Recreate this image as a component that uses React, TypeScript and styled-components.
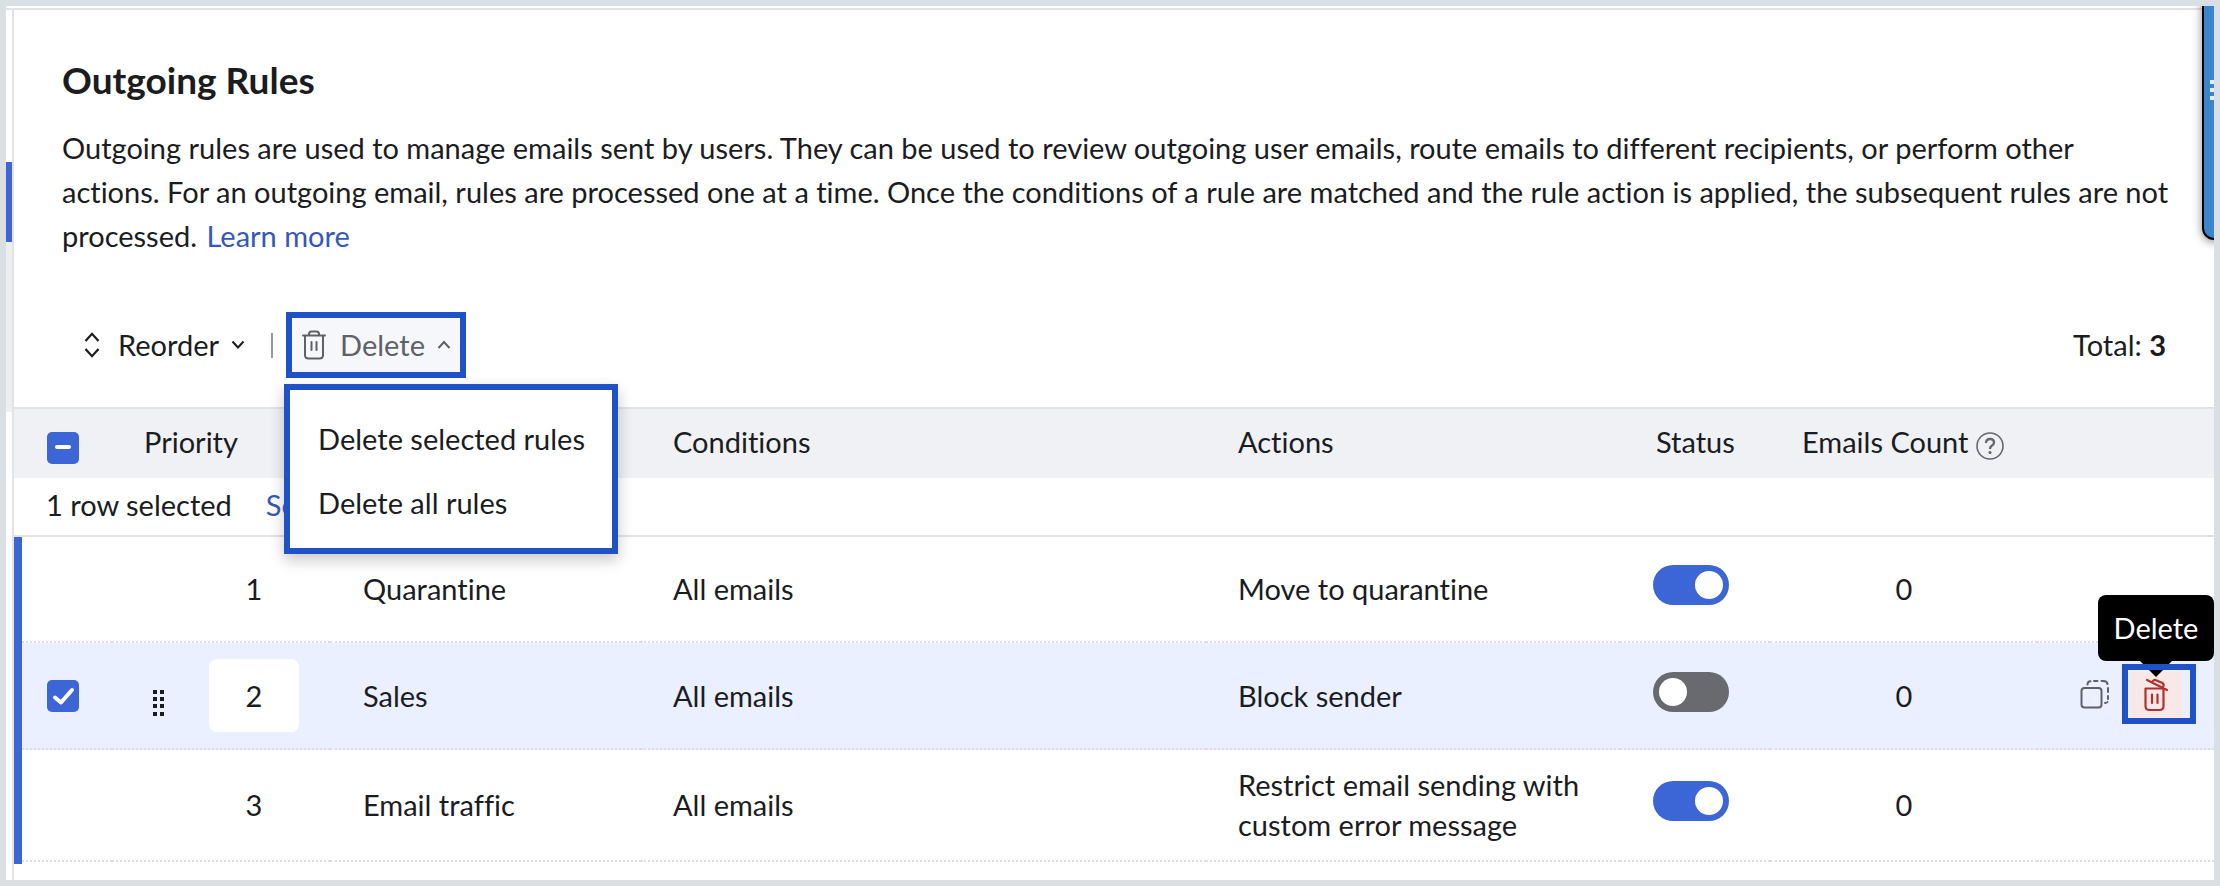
import React, { useEffect, useRef, useState } from "react";
import styled, { createGlobalStyle, css } from "styled-components";

const color = {
  frame: "#d9dfe2",
  line: "#e2e3e5",
  dots: "#dcdee3",
  ink: "#1b1c1f",
  muted: "#5f6166",
  brand: "#3c66d6",
  outline: "#2051c6",
  link: "#3558b8",
  head: "#f0f1f4",
  rowActive: "#eaf0ff",
  danger: "#b3302f",
};

const GlobalStyle = createGlobalStyle`
  *, *::before, *::after { box-sizing: border-box; }
  body {
    margin: 0;
    background: #fff;
    color: ${color.ink};
    font-family: Lato, "Liberation Sans", sans-serif;
    font-size: 29px;
    line-height: 40px;
    font-variant-ligatures: none;
  }
  button, input { font: inherit; color: inherit; }
  button { cursor: pointer; }
  a { color: ${color.link}; text-decoration: none; }
`;

const Frame = styled.div`
  position: relative;
  display: flex;
  min-height: 100vh;
  padding-top: 2px;
  border: 6px solid ${color.frame};
  overflow: hidden;
`;

const Rail = styled.div`
  display: flex;
  flex-direction: column;
  flex: none;
  width: 6px;
  padding-top: 152px;
  border-top: 2px solid ${color.line};
`;

const RailMark = styled.div<{ $active?: boolean }>`
  height: ${(p) => (p.$active ? 80 : 170)}px;
  background: ${(p) => (p.$active ? color.brand : "#eceef1")};
`;

const Content = styled.main`
  flex: 1;
  min-width: 0;
  border-top: 2px solid ${color.line};
  border-left: 2px solid ${color.line};
`;

const Intro = styled.header`
  padding: 48px 40px 0 48px;
`;

const Title = styled.h1`
  margin: 0 0 24px;
  font-size: 37px;
  line-height: 44px;
  font-weight: 700;
`;

const Description = styled.p`
  margin: 0;
  line-height: 44px;

  a { margin-left: 2px; }
`;

const Toolbar = styled.div`
  display: flex;
  align-items: center;
  padding: 54px 48px 29px 70px;
`;

const ToolButton = styled.button<{ $open?: boolean }>`
  display: flex;
  align-items: center;
  gap: 12px;
  height: 66px;
  padding: 0;
  border: 0;
  background: none;

  svg:first-child { margin-right: ${(p) => (p.$open ? 2 : 6)}px; }

  ${(p) =>
    p.$open &&
    css`
      padding: 0 9px 0 10px;
      border: 6px solid ${color.outline};
      background: #f6f7fa;
      color: ${color.muted};
    `}
`;

const Divider = styled.span`
  width: 2px;
  height: 25px;
  margin: 0 13px 0 26px;
  background: #97989c;
`;

const Total = styled.span`
  margin-left: auto;
`;

const MenuAnchor = styled.div`
  position: relative;
`;

const Menu = styled.div`
  position: absolute;
  z-index: 2;
  top: calc(100% + 6px);
  left: -2px;
  display: flex;
  flex-direction: column;
  width: 334px;
  padding: 17px 0 13px;
  border: 6px solid ${color.outline};
  background: #fff;
  box-shadow: 0 6px 14px rgba(0, 0, 0, 0.22);
`;

const MenuItem = styled.button`
  height: 64px;
  padding: 0 0 0 28px;
  border: 0;
  background: none;
  text-align: left;
  white-space: nowrap;
`;

const Table = styled.table`
  width: 100%;
  table-layout: fixed;
  border-spacing: 0;
`;

const HeadCell = styled.th<{ $left?: number }>`
  height: 71px;
  padding: 0 0 4px ${(p) => p.$left ?? 32}px;
  border-top: 2px solid ${color.line};
  background: ${color.head};
  font-weight: 400;
  text-align: left;
  white-space: nowrap;
`;

const SelectionCell = styled.td`
  height: 59px;
  padding: 0 0 4px 32px;
  border-bottom: 2px solid ${color.line};

  a { margin-left: 34px; }
`;

const Cell = styled.td<{ $left?: number }>`
  height: 106px;
  padding: 15px 0 15px ${(p) => p.$left ?? 32}px;
  border-bottom: 2px dotted ${color.dots};
`;

const MarkCell = styled(Cell)`
  position: relative;

  &::before {
    content: "";
    position: absolute;
    inset: 0 auto -4px 0;
    width: 8px;
    background: ${color.brand};
  }
`;

const SwitchCell = styled(Cell)`
  padding-bottom: 23px;
`;

const ActionsCell = styled(Cell)`
  padding-bottom: 18px;
`;

const Row = styled.tr<{ $selected: boolean }>`
  height: ${(p) => (p.$selected ? 107 : 106)}px;
  background: ${(p) => (p.$selected ? color.rowActive : "#fff")};
`;

const CheckLabel = styled.label<{ $low?: boolean }>`
  display: grid;
  width: 32px;
  margin-top: ${(p) => (p.$low ? 12 : 0)}px;

  > * { grid-area: 1 / 1; }
  svg { pointer-events: none; }
`;

const CheckInput = styled.input`
  appearance: none;
  width: 32px;
  height: 32px;
  margin: 0;
  border-radius: 5px;
  background: ${color.brand};
`;

const PriorityGrid = styled.div`
  display: grid;
  grid-template-columns: 12px 90px;
  column-gap: 44px;
  align-items: center;
`;

const Handle = styled.button`
  grid-column: 1;
  display: grid;
  margin-top: 14px;
  padding: 0;
  border: 0;
  background: none;
`;

const PriorityText = styled.span`
  grid-column: 2;
  text-align: center;
`;

const PriorityInput = styled.input`
  grid-column: 2;
  width: 90px;
  height: 73px;
  padding: 0;
  border: 0;
  border-radius: 8px;
  background: #fff;
  text-align: center;
`;

const Switch = styled.input`
  appearance: none;
  display: block;
  width: 76px;
  height: 40px;
  margin: 0;
  padding: 6px;
  border-radius: 20px;
  background: #686a70;

  &::before {
    content: "";
    display: block;
    width: 28px;
    height: 28px;
    border-radius: 50%;
    background: #fff;
  }
  &:checked { background: ${color.brand}; }
  &:checked::before { margin-left: auto; }
`;

const CountHead = styled.span`
  display: flex;
  align-items: center;
  gap: 8px;
`;

const Count = styled.span`
  display: block;
  width: 204px;
  text-align: center;
`;

const IconButton = styled.button`
  display: grid;
  place-items: center;
  padding: 0;
  border: 0;
  background: none;
`;

const HelpButton = styled(IconButton)`
  margin-top: 8px;
`;

const RowActions = styled.div`
  display: flex;
  align-items: center;
  justify-content: flex-end;
  gap: 12px;
  padding-right: 18px;
`;

const DeleteSpot = styled.div`
  position: relative;
  width: 74px;
  height: 60px;
  padding: 8px;

  &::after {
    content: "";
    position: absolute;
    z-index: 3;
    inset: 0;
    border: 6px solid ${color.outline};
    pointer-events: none;
  }
`;

const DangerButton = styled(IconButton)`
  width: 52px;
  height: 46px;
  background: #f9e8e8;
  color: ${color.danger};
`;

const Tooltip = styled.span`
  position: absolute;
  z-index: 2;
  right: -18px;
  bottom: calc(100% + 3px);
  display: grid;
  place-items: center;
  width: 116px;
  height: 66px;
  border-radius: 8px;
  background: #000;
  color: #fff;

  &::after {
    content: "";
    position: absolute;
    top: 100%;
    left: 42px;
    border: 16px solid transparent;
    border-top-color: #000;
    border-bottom: 0;
  }
`;

const SideTab = styled.button`
  position: absolute;
  top: -16px;
  right: -12px;
  display: flex;
  flex-direction: column;
  gap: 4px;
  width: 24px;
  height: 250px;
  padding: 88px 0 0 6px;
  border: 2px solid #000;
  border-radius: 12px;
  background: #3c84cc;
  box-shadow: 0 2px 10px rgba(0, 0, 0, 0.45);
`;

const TabDot = styled.span`
  width: 4px;
  height: 4px;
  background: #e4ecf4;
`;

const SortIcon = () => (
  <svg width="16" height="26" viewBox="0 0 16 26" fill="none" stroke="currentColor" strokeWidth="2.2" aria-hidden="true">
    <path d="M1.5 9 8 1.8 14.5 9M1.5 17 8 24.2 14.5 17" />
  </svg>
);

const Chevron = ({ up = false }: { up?: boolean }) => (
  <svg width="14" height="10" viewBox="0 0 14 10" fill="none" stroke="currentColor" strokeWidth="2" aria-hidden="true">
    <path d={up ? "M1.5 8 7 2 12.5 8" : "M1.5 1.5 7 7.5 12.5 1.5"} />
  </svg>
);

const TrashIcon = () => (
  <svg width="24" height="30" viewBox="0 0 24 30" fill="none" stroke="currentColor" strokeWidth="2" strokeLinecap="round" aria-hidden="true">
    <path d="M1 5.5h22M7 5V4q0-2.500 2.500-2.500h5Q17 1.500 17 4v1M3 6v19q0 3.500 3.500 3.500h11q3.500 0 3.500-3.500V6M9.500 12v8M14.500 12v8" />
  </svg>
);

const OpenTrashIcon = () => (
  <svg width="26" height="34" viewBox="0 0 26 34" fill="none" stroke="currentColor" strokeWidth="2.200" strokeLinecap="round" aria-hidden="true">
    <path d="M4 2 24 12M9 4.500l1-1.500q1-1.500 3-.8l6 2.600q2 1 1.500 3l-.6 1.700" />
    <path d="M2.500 10.500H20M2.500 10.500V28q0 4 4 4h10q4 0 4-4V11.500M9 16.500v8.500M14.500 16.500v8.500" />
  </svg>
);

const CopyIcon = () => (
  <svg width="30" height="30" viewBox="0 0 30 30" fill="none" stroke="#5d6069" strokeWidth="2" strokeLinecap="round" aria-hidden="true">
    <rect x="1.500" y="9" width="20" height="19.500" rx="3" />
    <path d="M7.500 5.500q0-3 3-3.200M14 2h3.500M21.500 2h2q3.500 0 4 3M28 9v4M28 17v3M27.500 23q-.8 1-2.500 1" />
  </svg>
);

const HandleIcon = () => (
  <svg width="12" height="26" viewBox="0 0 12 26" fill={color.ink} aria-hidden="true">
    {[0, 7, 14, 22].map((y) => (
      <g key={y}>
        <rect x="0" y={y} width="4" height="4" />
        <rect x="7" y={y} width="4" height="4" />
      </g>
    ))}
  </svg>
);

const HelpIcon = () => (
  <svg width="28" height="28" viewBox="0 0 28 28" fill="none" stroke="#66686e" aria-hidden="true">
    <circle cx="14" cy="14" r="13" strokeWidth="1.600" />
    <path d="M10 11q0-4 4-4t4 3.500q0 2-2.300 3.200Q14 14.800 14 17" strokeWidth="2.400" />
    <circle cx="14" cy="20.500" r="1" strokeWidth="1.200" fill="#66686e" />
  </svg>
);

type CheckProps = { label: string; mixed?: boolean };

function Check({ label, mixed = false }: CheckProps) {
  const ref = useRef<HTMLInputElement>(null);
  useEffect(() => {
    if (ref.current) ref.current.indeterminate = mixed;
  }, [mixed]);
  return (
    <CheckLabel $low={mixed}>
      <CheckInput ref={ref} type="checkbox" aria-label={label} defaultChecked={!mixed} />
      <svg width="32" height="32" viewBox="0 0 32 32" fill="none" stroke="#fff" strokeWidth="4" strokeLinecap="round" strokeLinejoin="round" aria-hidden="true">
        <path d={mixed ? "M10 15h12" : "M8 17.500 14 22.500 25 10"} />
      </svg>
    </CheckLabel>
  );
}

const rules = [
  { id: 1, name: "Quarantine", condition: "All emails", action: "Move to quarantine", on: true, count: 0, selected: false },
  { id: 2, name: "Sales", condition: "All emails", action: "Block sender", on: false, count: 0, selected: true },
  { id: 3, name: "Email traffic", condition: "All emails", action: "Restrict email sending with custom error message", on: true, count: 0, selected: false },
];

const WrapText = styled.span`
  display: block;
  max-width: 360px;
`;

const Wide = styled.col``;
const Col = styled.col<{ $w: number }>`
  width: ${(p) => p.$w}px;
`;

export default function App() {
  const [menuOpen, setMenuOpen] = useState(true);

  return (
    <Frame>
      <GlobalStyle />
      <Rail>
        <RailMark $active />
        <RailMark />
      </Rail>
      <Content>
        <Intro>
          <Title>Outgoing Rules</Title>
          <Description>
            Outgoing rules are used to manage emails sent by users. They can be used to review outgoing user emails,
            route emails to different recipients, or perform other actions. For an outgoing email, rules are processed
            one at a time. Once the conditions of a rule are matched and the rule action is applied, the subsequent
            rules are not processed. <a href="#learn">Learn more</a>
          </Description>
        </Intro>

        <Toolbar>
          <ToolButton type="button">
            <SortIcon /> Reorder <Chevron />
          </ToolButton>
          <Divider />
          <MenuAnchor>
            <ToolButton type="button" $open aria-expanded={menuOpen} onClick={() => setMenuOpen(!menuOpen)}>
              <TrashIcon /> Delete <Chevron up />
            </ToolButton>
            {menuOpen && (
              <Menu role="menu">
                <MenuItem type="button" role="menuitem">Delete selected rules</MenuItem>
                <MenuItem type="button" role="menuitem">Delete all rules</MenuItem>
              </Menu>
            )}
          </MenuAnchor>
          <Total>
            Total: <b>3</b>
          </Total>
        </Toolbar>

        <Table>
          <colgroup>
            <Col $w={98} />
            <Col $w={218} />
            <Col $w={311} />
            <Wide />
            <Col $w={414} />
            <Col $w={150} />
            <Col $w={267} />
            <Col $w={177} />
          </colgroup>
          <thead>
            <tr>
              <HeadCell $left={33}>
                <Check label="Select all rules" mixed />
              </HeadCell>
              <HeadCell>Priority</HeadCell>
              <HeadCell />
              <HeadCell>Conditions</HeadCell>
              <HeadCell>Actions</HeadCell>
              <HeadCell $left={36}>Status</HeadCell>
              <HeadCell>
                <CountHead>
                  Emails Count
                  <HelpButton type="button" aria-label="About emails count">
                    <HelpIcon />
                  </HelpButton>
                </CountHead>
              </HeadCell>
              <HeadCell />
            </tr>
          </thead>
          <tbody>
            <tr>
              <SelectionCell colSpan={8}>
                1 row selected<a href="#all">Select all</a>
              </SelectionCell>
            </tr>
            {rules.map((rule) => (
              <Row key={rule.id} $selected={rule.selected}>
                <MarkCell $left={33}>{rule.selected && <Check label={`Select ${rule.name}`} />}</MarkCell>
                <Cell $left={41}>
                  <PriorityGrid>
                    {rule.selected ? (
                      <>
                        <Handle type="button" aria-label="Drag to reorder">
                          <HandleIcon />
                        </Handle>
                        <PriorityInput aria-label="Priority" defaultValue={rule.id} />
                      </>
                    ) : (
                      <PriorityText>{rule.id}</PriorityText>
                    )}
                  </PriorityGrid>
                </Cell>
                <Cell $left={33}>{rule.name}</Cell>
                <Cell>{rule.condition}</Cell>
                <Cell>
                  <WrapText>{rule.action}</WrapText>
                </Cell>
                <SwitchCell $left={33}>
                  <Switch type="checkbox" role="switch" aria-label={`${rule.name} status`} defaultChecked={rule.on} />
                </SwitchCell>
                <Cell>
                  <Count>{rule.count}</Count>
                </Cell>
                <ActionsCell $left={0}>
                  {rule.selected && (
                    <RowActions>
                      <IconButton type="button" aria-label="Duplicate">
                        <CopyIcon />
                      </IconButton>
                      <DeleteSpot>
                        <DangerButton type="button" aria-label="Delete">
                          <OpenTrashIcon />
                        </DangerButton>
                        <Tooltip role="tooltip">Delete</Tooltip>
                      </DeleteSpot>
                    </RowActions>
                  )}
                </ActionsCell>
              </Row>
            ))}
          </tbody>
        </Table>
      </Content>
      <SideTab type="button" aria-label="Open side panel">
        <TabDot />
        <TabDot />
        <TabDot />
      </SideTab>
    </Frame>
  );
}
